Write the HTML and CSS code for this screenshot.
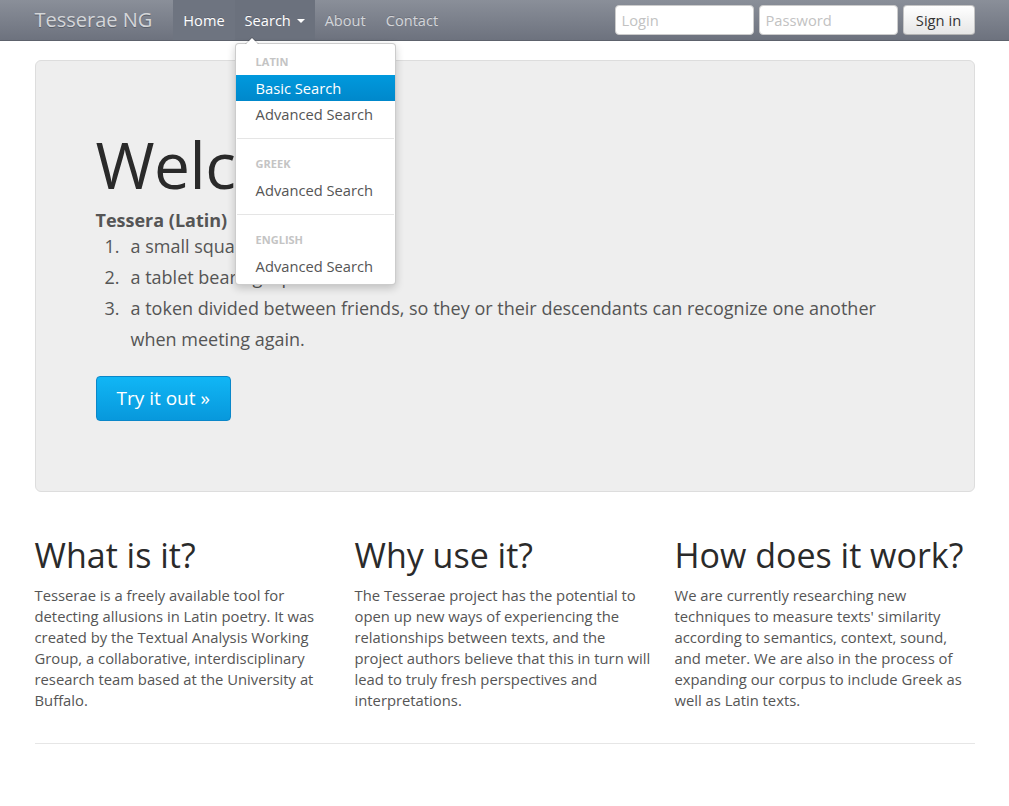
FILE: index.html
```html
<!DOCTYPE html>
<html>
<head>
<meta charset="utf-8">
<title>Tesserae NG</title>
<link rel="stylesheet" href="styles.css">
</head>
<body>
<div class="navbar">
  <div class="container nav-inner">
    <a class="brand" href="#">Tesserae NG</a>
    <ul class="nav">
      <li class="active"><a href="#">Home</a></li>
      <li class="dropdown open">
        <a href="#">Search <span class="caret"></span></a>
        <ul class="dropdown-menu">
          <li class="nav-header">Latin</li>
          <li class="hl"><a href="#">Basic Search</a></li>
          <li><a href="#">Advanced Search</a></li>
          <li class="divider"></li>
          <li class="nav-header">Greek</li>
          <li><a href="#">Advanced Search</a></li>
          <li class="divider"></li>
          <li class="nav-header">English</li>
          <li><a href="#">Advanced Search</a></li>
        </ul>
      </li>
      <li><a href="#">About</a></li>
      <li><a href="#">Contact</a></li>
    </ul>
    <form class="signin">
      <input type="text" placeholder="Login">
      <input type="password" placeholder="Password">
      <button type="button" class="btn">Sign in</button>
    </form>
  </div>
</div>

<div class="container main">
  <div class="hero">
    <h1>Welcome</h1>
    <p class="term">Tessera (Latin)</p>
    <ol class="defs">
      <li>a small square</li>
      <li>a tablet bearing a password</li>
      <li>a token divided between friends, so they or their descendants can recognize one another when meeting again.</li>
    </ol>
    <p><a class="btn-primary" href="#">Try it out »</a></p>
  </div>

  <div class="row">
    <div class="col">
      <h2>What is it?</h2>
      <p>Tesserae is a freely available tool for detecting allusions in Latin poetry. It was created by the Textual Analysis Working Group, a collaborative, interdisciplinary research team based at the University at Buffalo.</p>
    </div>
    <div class="col">
      <h2>Why use it?</h2>
      <p>The Tesserae project has the potential to open up new ways of experiencing the relationships between texts, and the project authors believe that this in turn will lead to truly fresh perspectives and interpretations.</p>
    </div>
    <div class="col">
      <h2>How does it work?</h2>
      <p>We are currently researching new techniques to measure texts' similarity according to semantics, context, sound, and meter. We are also in the process of expanding our corpus to include Greek as well as Latin texts.</p>
    </div>
  </div>
  <hr class="rule">
</div>
</body>
</html>
```

FILE: styles.css
```css
* { box-sizing: border-box; }
html, body { margin: 0; padding: 0; }
body {
  font-family: "Open Sans", "Liberation Sans", sans-serif;
  font-size: 14.8px;
  line-height: 21px;
  color: #555;
  background: #fff;
}
a { text-decoration: none; }
.container { width: 940px; margin: 0 auto; }

/* navbar */
.navbar {
  height: 41px;
  background: linear-gradient(to bottom, #8a8f99, #6d727e);
  border-bottom: 1px solid #5d626c;
}
.nav-inner { display: flex; align-items: stretch; height: 40px; }
.brand {
  font-size: 20px;
  line-height: 40px;
  color: #d4d6d9;
  padding-right: 21px;
  text-shadow: 0 1px 0 #5a5f69;
}
.nav { list-style: none; margin: 0; padding: 0; display: flex; }
.nav > li { position: relative; }
.nav > li > a {
  display: block;
  font-size: 14.6px;
  line-height: 40px;
  padding: 0 10px;
  color: #d3d5d9;
  text-shadow: 0 -1px 0 rgba(0,0,0,0.15);
}
.nav > li.active > a, .nav > li.open > a {
  background: #6e7480;
  color: #fff;
}
.nav > li.open > a { background: #6b717d; }
.caret {
  display: inline-block;
  width: 0; height: 0;
  border-left: 4px solid transparent;
  border-right: 4px solid transparent;
  border-top: 4px solid #fff;
  vertical-align: middle;
  margin-left: 2px;
  margin-top: -2px;
}
.dropdown-menu {
  position: absolute;
  top: 43px;
  left: 0;
  width: 161px;
  list-style: none;
  margin: 0;
  padding: 5px 0;
  background: #fff;
  border: 1px solid rgba(0,0,0,0.2);
  border-radius: 4px;
  box-shadow: 0 3px 8px rgba(0,0,0,0.2);
  z-index: 10;
}
.dropdown-menu::before {
  content: "";
  position: absolute;
  top: -7px; left: 9px;
  border-left: 7px solid transparent;
  border-right: 7px solid transparent;
  border-bottom: 7px solid rgba(0,0,0,0.2);
}
.dropdown-menu::after {
  content: "";
  position: absolute;
  top: -6px; left: 10px;
  border-left: 6px solid transparent;
  border-right: 6px solid transparent;
  border-bottom: 6px solid #fff;
}
.dropdown-menu li a {
  display: block;
  padding: 3px 20px;
  line-height: 20px;
  font-size: 14.7px;
  color: #555;
}
.dropdown-menu li.hl a {
  color: #fff;
  background: linear-gradient(to bottom, #0099dd, #0088cb);
}
.nav-header {
  padding: 3px 20px;
  line-height: 20px;
  font-size: 11px;
  font-weight: bold;
  color: #c4c4c4;
  text-transform: uppercase;
}
.divider {
  box-sizing: content-box;
  height: 1px;
  margin: 11px 1px;
  background: #e5e5e5;
  border-bottom: 1px solid #fff;
}
.signin { margin-left: auto; display: flex; align-items: center; gap: 5px; }
.signin input {
  width: 139px;
  height: 30px;
  border: 1px solid #ccc;
  border-radius: 4px;
  padding: 4px 6px;
  font-family: inherit;
  font-size: 14.7px;
  color: #555;
  background: #fff;
}
.signin input::placeholder { color: #c2c2c2; }
.btn {
  height: 30px;
  width: 72px;
  padding: 0;
  font-family: inherit;
  font-size: 14.7px;
  color: #333;
  background: linear-gradient(to bottom, #fff, #e6e6e6);
  border: 1px solid #c5c5c5;
  border-bottom-color: #b3b3b3;
  border-radius: 4px;
}

/* main */
.main { padding-top: 19px; }
.hero {
  background: #eee;
  border: 1px solid #ddd;
  border-radius: 6px;
  padding: 60px 60px 60px;
  margin-bottom: 30px;
}
.hero h1 {
  font-size: 64px;
  font-weight: normal;
  line-height: 1;
  color: #2a2a2a;
  margin: 12px 0 12px;
  letter-spacing: -0.5px;
}
.hero p { margin: 0 0 10px; font-size: 18px; line-height: 31px; }
.hero .term { font-weight: bold; margin: 0; line-height: 22px; }
.defs {
  list-style: none;
  counter-reset: item;
  margin: 0 0 21px;
  padding-left: 35px;
  font-size: 18px;
  line-height: 31px;
}
.defs li { counter-increment: item; }
.defs li::before {
  content: counter(item) ".";
  display: inline-block;
  width: 26px;
  margin-left: -26px;
}
.btn-primary {
  display: inline-block;
  padding: 10px 20px;
  font-size: 19px;
  line-height: 23px;
  color: #fff;
  background: linear-gradient(to bottom, #11b6f5, #0798dc);
  border: 1px solid #0a87c9;
  border-radius: 4px;
}

.row { display: grid; grid-template-columns: repeat(3, 300px); gap: 20px; padding-top: 10px; }
.col h2 {
  font-size: 34px;
  font-weight: normal;
  line-height: 40px;
  color: #2a2a2a;
  margin: 3px 0 10px;
  white-space: nowrap;
}
.col p { margin: 0 0 10px; }
.rule {
  border: 0;
  border-top: 1px solid #e6e6e6;
  margin: 22px 0;
}
```
